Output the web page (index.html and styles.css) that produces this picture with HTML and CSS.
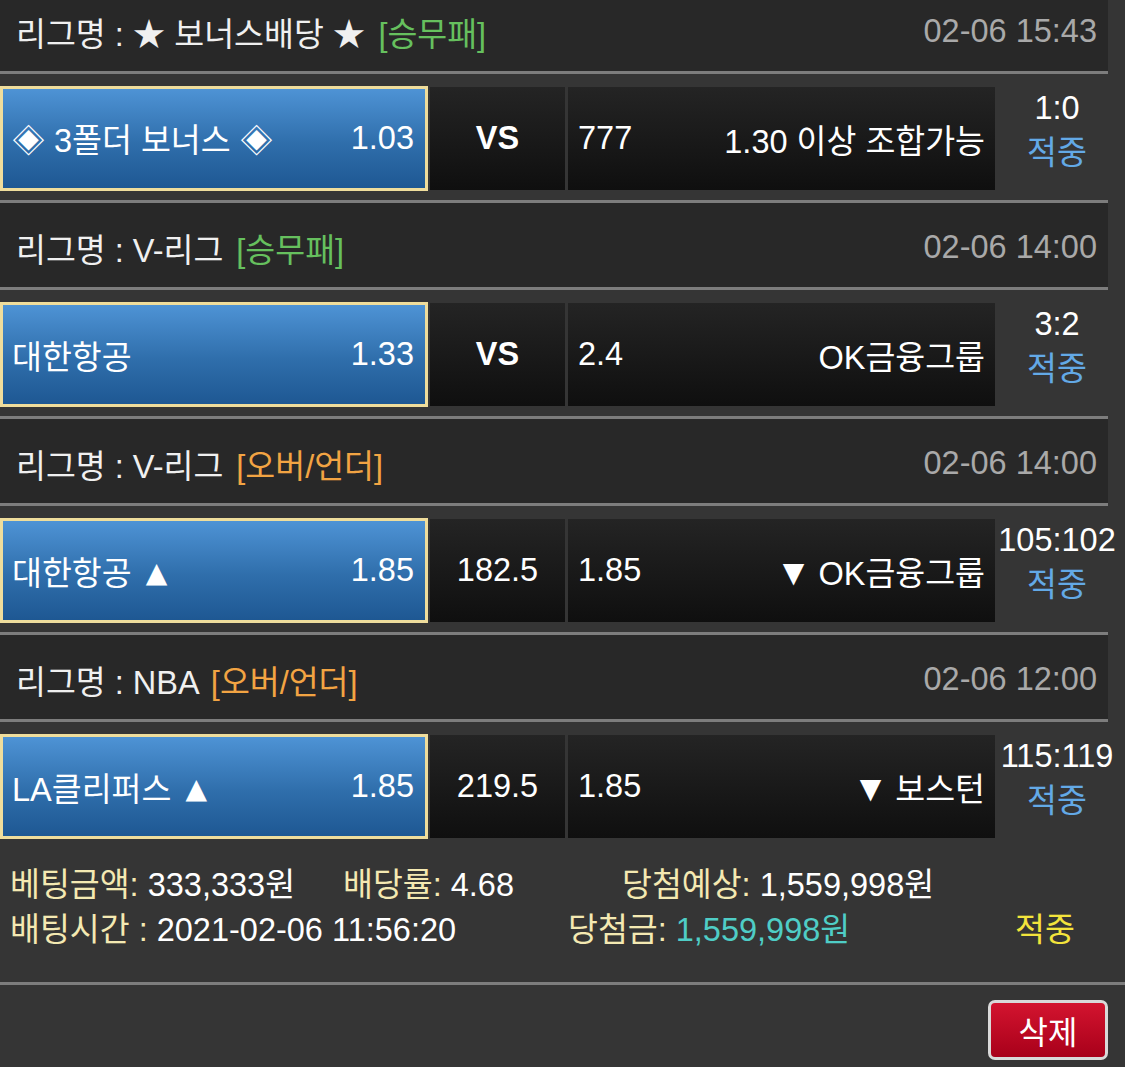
FILE: index.html
```
<!DOCTYPE html>
<html lang="ko">
<head>
  <meta charset="UTF-8" />
  <title>베팅내역</title>
  <link rel="stylesheet" href="styles.css">
</head>
<body>
  <!-- 경기 목록 -->
  <div class="bet-list">
    <div class="league">
      <div class="league-name">리그명 : ★ 보너스배당 ★ <span class="type win">[승무패]</span></div>
      <div class="league-time">02-06 15:43</div>
    </div>
    <div class="match">
      <div class="pick"><span>◈ 3폴더 보너스 ◈</span><span>1.03</span></div>
      <div class="cell mid vs">VS</div>
      <div class="cell away"><span>777</span><span>1.30 이상 조합가능</span></div>
      <div class="score"><div>1:0</div><div class="hit">적중</div></div>
    </div>

    <div class="league">
      <div class="league-name">리그명 : V-리그 <span class="type win">[승무패]</span></div>
      <div class="league-time">02-06 14:00</div>
    </div>
    <div class="match">
      <div class="pick"><span>대한항공</span><span>1.33</span></div>
      <div class="cell mid vs">VS</div>
      <div class="cell away"><span>2.4</span><span>OK금융그룹</span></div>
      <div class="score"><div>3:2</div><div class="hit">적중</div></div>
    </div>

    <div class="league">
      <div class="league-name">리그명 : V-리그 <span class="type ou">[오버/언더]</span></div>
      <div class="league-time">02-06 14:00</div>
    </div>
    <div class="match">
      <div class="pick"><span>대한항공 <span class="arrow up">▲</span></span><span>1.85</span></div>
      <div class="cell mid">182.5</div>
      <div class="cell away"><span>1.85</span><span><span class="arrow down">▼</span> OK금융그룹</span></div>
      <div class="score"><div>105:102</div><div class="hit">적중</div></div>
    </div>

    <div class="league">
      <div class="league-name">리그명 : NBA <span class="type ou">[오버/언더]</span></div>
      <div class="league-time">02-06 12:00</div>
    </div>
    <div class="match">
      <div class="pick"><span>LA클리퍼스 <span class="arrow up">▲</span></span><span>1.85</span></div>
      <div class="cell mid">219.5</div>
      <div class="cell away"><span>1.85</span><span><span class="arrow down">▼</span> 보스턴</span></div>
      <div class="score"><div>115:119</div><div class="hit">적중</div></div>
    </div>
  </div>

  <!-- 베팅 요약 -->
  <div class="summary">
    <div class="summary-row">
      <div class="col-amount"><span class="label">베팅금액:</span> 333,333원</div>
      <div class="col-rate"><span class="label">배당률:</span> 4.68</div>
      <div><span class="label">당첨예상:</span> 1,559,998원</div>
    </div>
    <div class="summary-row">
      <div class="col-time"><span class="label">배팅시간 :</span> 2021-02-06 11:56:20</div>
      <div class="col-prize"><span class="label">당첨금:</span> <span class="won">1,559,998원</span></div>
      <div class="result">적중</div>
    </div>
  </div>

  <div class="actions">
    <button class="btn-delete">삭제</button>
  </div>
</body>
</html>
```

FILE: styles.css
```
body {
  margin: 0;
  background-color: #353535;
  font-family: "Liberation Sans", "Noto Sans CJK KR", sans-serif;
  font-size: 32.5px;
  color: #fff;
}

.bet-list {
  width: 1108px;
  margin-top: -16px;
}

.league {
  height: 80px;
  background: #282828;
  border-top: 3px solid #7d7d7d;
  border-bottom: 3px solid #7d7d7d;
  display: flex;
  justify-content: space-between;
  align-items: center;
  padding: 4px 11px 0 16px;
}

.league-name {
  color: #f0f0f0;
}

.type {
  margin-left: 4px;
}

.type.win {
  color: #66c05e;
}

.type.ou {
  color: #f2a443;
}

.league-time {
  color: #a9a9a9;
}

.match {
  display: flex;
  height: 105px;
  padding: 12px 0 9px;
}

.pick {
  width: 428px;
  flex-shrink: 0;
  box-sizing: border-box;
  border: 3px solid #efdd9c;
  background: linear-gradient(#4e93d5, #2f6eab 55%, #1e5893);
  display: flex;
  justify-content: space-between;
  align-items: center;
  padding: 0 11px 0 9px;
}

.arrow {
  font-family: "DejaVu Sans", sans-serif;
  font-size: 28px;
  vertical-align: 3px;
}

.arrow.up {
  margin-left: 5px;
}

.arrow.down {
  margin-right: 5px;
}

.cell {
  background: linear-gradient(#242424, #0f0f0f);
  display: flex;
  align-items: center;
  margin: 1px 0;
  flex-shrink: 0;
}

.mid {
  width: 135px;
  margin-left: 2px;
  justify-content: center;
}

.mid.vs {
  font-weight: bold;
}

.away {
  width: 427px;
  margin-left: 3px;
  box-sizing: border-box;
  padding: 0 10px;
  justify-content: space-between;
}

.score {
  width: 124px;
  flex-shrink: 0;
  text-align: center;
  line-height: 45px;
}

.hit {
  color: #63a9e6;
}

.summary {
  padding: 15px 0 29px 10px;
  border-bottom: 3px solid #7d7d7d;
  line-height: 45px;
}

.summary-row {
  display: flex;
}

.col-amount {
  width: 333px;
}

.col-rate {
  width: 279px;
}

.col-time {
  width: 558px;
}

.col-prize {
  width: 447px;
}

.label {
  color: #f4e9b2;
}

.won {
  color: #4fcdc6;
}

.result {
  color: #f3e43c;
}

.actions {
  display: flex;
  justify-content: flex-end;
  padding: 15px 17px 0 0;
}

.btn-delete {
  width: 120px;
  height: 60px;
  border: 3px solid #d9d9d9;
  border-radius: 7px;
  background: linear-gradient(#d3142f, #a8001a);
  color: #fff;
  font-family: inherit;
  font-size: 32px;
  cursor: pointer;
}
```
